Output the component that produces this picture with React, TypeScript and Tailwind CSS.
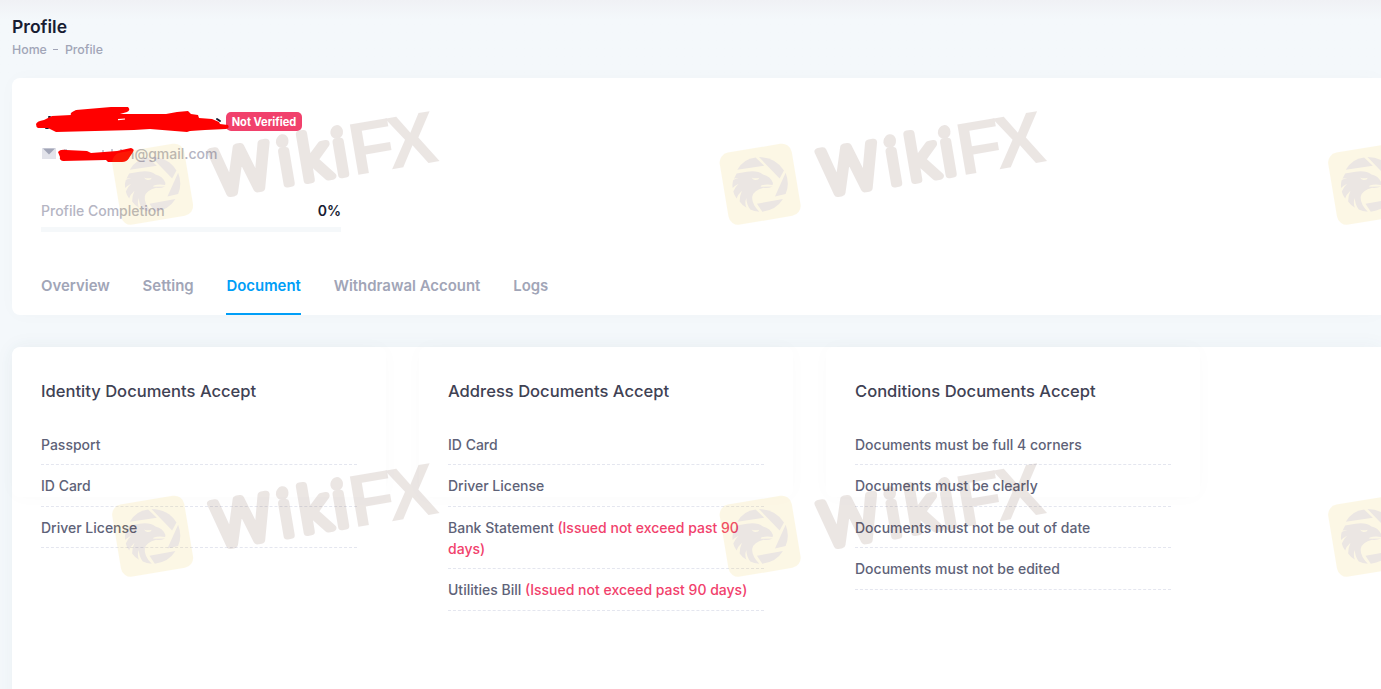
import clsx from 'clsx';

const tabs = ['Overview', 'Setting', 'Document', 'Withdrawal Account', 'Logs'];

type DocumentItem = { label: string; note?: string };

const sections: { title: string; items: DocumentItem[] }[] = [
  {
    title: 'Identity Documents Accept',
    items: [{ label: 'Passport' }, { label: 'ID Card' }, { label: 'Driver License' }],
  },
  {
    title: 'Address Documents Accept',
    items: [
      { label: 'ID Card' },
      { label: 'Driver License' },
      { label: 'Bank Statement', note: '(Issued not exceed past 90 days)' },
      { label: 'Utilities Bill', note: '(Issued not exceed past 90 days)' },
    ],
  },
  {
    title: 'Conditions Documents Accept',
    items: [
      { label: 'Documents must be full 4 corners' },
      { label: 'Documents must be clearly' },
      { label: 'Documents must not be out of date' },
      { label: 'Documents must not be edited' },
    ],
  },
];

// the last column runs off the page, only its badge fits
const watermarks = [
  { x: 102.5, y: 95, named: true },
  { x: 710, y: 95, named: true },
  { x: 1318.5, y: 95, named: false },
  { x: 102.5, y: 447, named: true },
  { x: 710, y: 447, named: true },
  { x: 1318.5, y: 447, named: false },
];

function Watermark({ named }: { named: boolean }) {
  return (
    <g opacity="0.12">
      {/* badge with the eagle inside the shutter */}
      <g transform="translate(5.3 45.4) scale(0.3333)">
        <rect x="25" y="22" width="219" height="219" rx="30" fill="#eec52f" transform="rotate(-9.5 134.5 131.5)" />
        <g fill="#613726">
          <path d="M66 88 Q84 55 121 51 L147 76 Z" />
          <path d="M131 50 Q181 51 206 90 L193 114 Z" />
          <path d="M211 97 Q224 130 211 161 L179 168 Z" />
          <path d="M125 190 L203 176 Q183 209 141 214 Z" />
          <path d="M64 99 L95 94 Q126 89 143 102 Q166 107 173 128 L172 134 Q155 130 138 135 L136 139 L172 138 Q158 144 145 142 Q115 150 111 168 Q108 190 132 214 Q116 213 105 207 Q94 195 93 173 Q87 190 94 202 Q80 194 73 183 Q73 166 80 151 Q67 163 64 174 Q56 163 54 153 Q60 139 70 130 Q58 136 52 143 Q50 129 54 119 Q62 114 70 113 Q61 112 56 115 Z" />
        </g>
        <path d="M109 111 Q118 116 132 112 Q130 120 119 119 Q112 117 109 111 Z" fill="#eec52f" />
      </g>
      {named && (
        <g transform="rotate(-9.61)" fill="#613726" fontFamily="Roboto, sans-serif">
          <g fontSize="62" fontWeight="300" stroke="#613726" strokeWidth="7.6" strokeLinejoin="round">
            <text transform="translate(95.5 118.2) scale(1.06 1)">W</text>
            <text x="162.3 183 217.7" y="118.2">
              iki
            </text>
          </g>
          <circle cx="170" cy="74.5" r="5.8" />
          <circle cx="225.2" cy="74.5" r="5.8" />
          <text x="234 272.5" y="121.4" fontSize="74" fontWeight="700" fontFamily="Liberation Sans, Arial, sans-serif">
            FX
          </text>
        </g>
      )}
    </g>
  );
}

function Scribbles() {
  return (
    <svg className="absolute -left-[5px] -top-[11px]" width="200" height="70" viewBox="36 101 200 70">
      <g stroke="#181c32" strokeWidth="2" strokeLinecap="round">
        <path d="M49 117 H50 M46 128 H48 M217 119 L220 121" />
      </g>
      <path d="M64 150 H67 M103 150 V158 M112 149 V158 M121 149 V158" stroke="#b5b5c3" strokeWidth="1.5" />
      <path
        fill="#ff0000"
        d="M36 124 Q37 121 44 120 L52 116 L71 115 Q69 113 76 110 L111 107 L128 107 Q131 110 127 112 L120 114 L166 114 L177 112 L188 111 L191 114 L198 115 L199 118 L212 119 L219 122 L220 124 L228 125 Q230 128 226 129 L205 130 L190 131 L187 132 L150 129 L134 130 L56 132 L48 128 L38 128 Q36 127 36 124 Z"
      />
      <path d="M118 119.7 L125 119" stroke="#fff" strokeWidth="1.2" />
      <path
        fill="#ff0000"
        d="M58 152 Q60 149 66 150 L87 151 L91 153 L117 151 L131 148 Q135 149 133 152 L129 158 Q127 162 122 162 L108 162 L106 160 L63 161 Q59 160 60 157 Z"
      />
    </svg>
  );
}

function MailIcon() {
  return (
    <svg width="14" height="11" viewBox="0 0 14 11">
      <path d="M0 0 H14 V11 H0 Z" fill="#e2e3ea" />
      <path d="M1 0.5 H13 L7 6.5 Z" fill="#a1a5b7" />
    </svg>
  );
}

function ProfileCard() {
  return (
    <section className="h-[237px] rounded-l-lg bg-white px-[29px] pt-7 shadow-[0_0_20px_rgba(76,87,125,0.02)]">
      <div className="relative mt-1.5 flex h-[19px] items-center pl-[185px]">
        <span className="flex h-[19px] w-[76px] items-center justify-center rounded-[5px] bg-[#f1416c] pt-px text-[11.05px] font-bold text-white">
          Not Verified
        </span>
        <Scribbles />
      </div>
      <div className="mt-[13px] flex h-5 items-center text-sm font-medium text-[#b5b5c3]">
        <span className="-mt-px ml-px">
          <MailIcon />
        </span>
        <span className="ml-[70px]">n@gmail.com</span>
      </div>
      <div className="mt-[37px] flex h-5 w-[300px] items-center justify-between text-sm font-medium">
        <span className="text-[#b5b5c3]">Profile Completion</span>
        <span className="font-semibold text-[#181c32]">0%</span>
      </div>
      <div className="mt-[6px] h-[5px] w-[300px] bg-[#f5f8fa]" />
      <nav className="mt-[25px] flex h-[58px] gap-[32.8px] text-[14.95px] font-semibold text-[#a1a5b7]">
        {tabs.map((tab) => (
          <a
            key={tab}
            className={clsx(
              'flex items-center border-b-2 pt-0.5',
              tab === 'Document' ? 'border-[#009ef7] text-[#009ef7]' : 'border-transparent',
            )}
          >
            {tab}
          </a>
        ))}
      </nav>
    </section>
  );
}

function DocumentSection({ title, items }: { title: string; items: DocumentItem[] }) {
  return (
    <div className="h-[150px] w-[374px] rounded-lg px-[29px] pt-[31px] shadow-[0_0_20px_rgba(76,87,125,0.02)]">
      <h3 className="text-[16.575px] leading-[26px] font-medium text-[#3f4254]">{title}</h3>
      <ul className="mt-[20px]">
        {items.map((item) => (
          <li
            key={item.label}
            className="border-b border-dashed border-[#e4e6ef] pt-[11px] pb-[8.5px] text-sm leading-[20.96px] font-medium text-[#5e6278]"
          >
            {item.label} {item.note && <span className="text-[#f1416c]">{item.note}</span>}
          </li>
        ))}
      </ul>
    </div>
  );
}

export default function App() {
  return (
    <div className="relative h-[689px] overflow-hidden bg-[#f4f8fb] font-[Inter,sans-serif]">
      <div className="h-[78px] bg-linear-to-b from-[#f0f1f5] to-[#f4f8fb] to-25% pt-4 pl-3">
        <h1 className="text-[17.55px] leading-[22px] font-semibold text-[#181c32]">Profile</h1>
        <div className="mt-[3px] flex items-center text-[12.35px] leading-[18px] font-medium text-[#a1a5b7]">
          <span>Home</span>
          <span className="mr-[7px] mb-0.5 ml-1.5 h-px w-[5px] bg-[#a1a5b7]" />
          <span>Profile</span>
        </div>
      </div>
      <main className="flex flex-col gap-8 pl-3">
        <ProfileCard />
        <section className="flex h-[400px] gap-[33px] rounded-l-lg bg-white shadow-[0_0_20px_rgba(60,90,115,0.05)]">
          {sections.map((section) => (
            <DocumentSection key={section.title} {...section} />
          ))}
        </section>
      </main>
      <svg className="pointer-events-none absolute inset-0" width="1381" height="689">
        {watermarks.map(({ x, y, named }) => (
          <g key={`${x}-${y}`} transform={`translate(${x} ${y})`}>
            <Watermark named={named} />
          </g>
        ))}
      </svg>
    </div>
  );
}
